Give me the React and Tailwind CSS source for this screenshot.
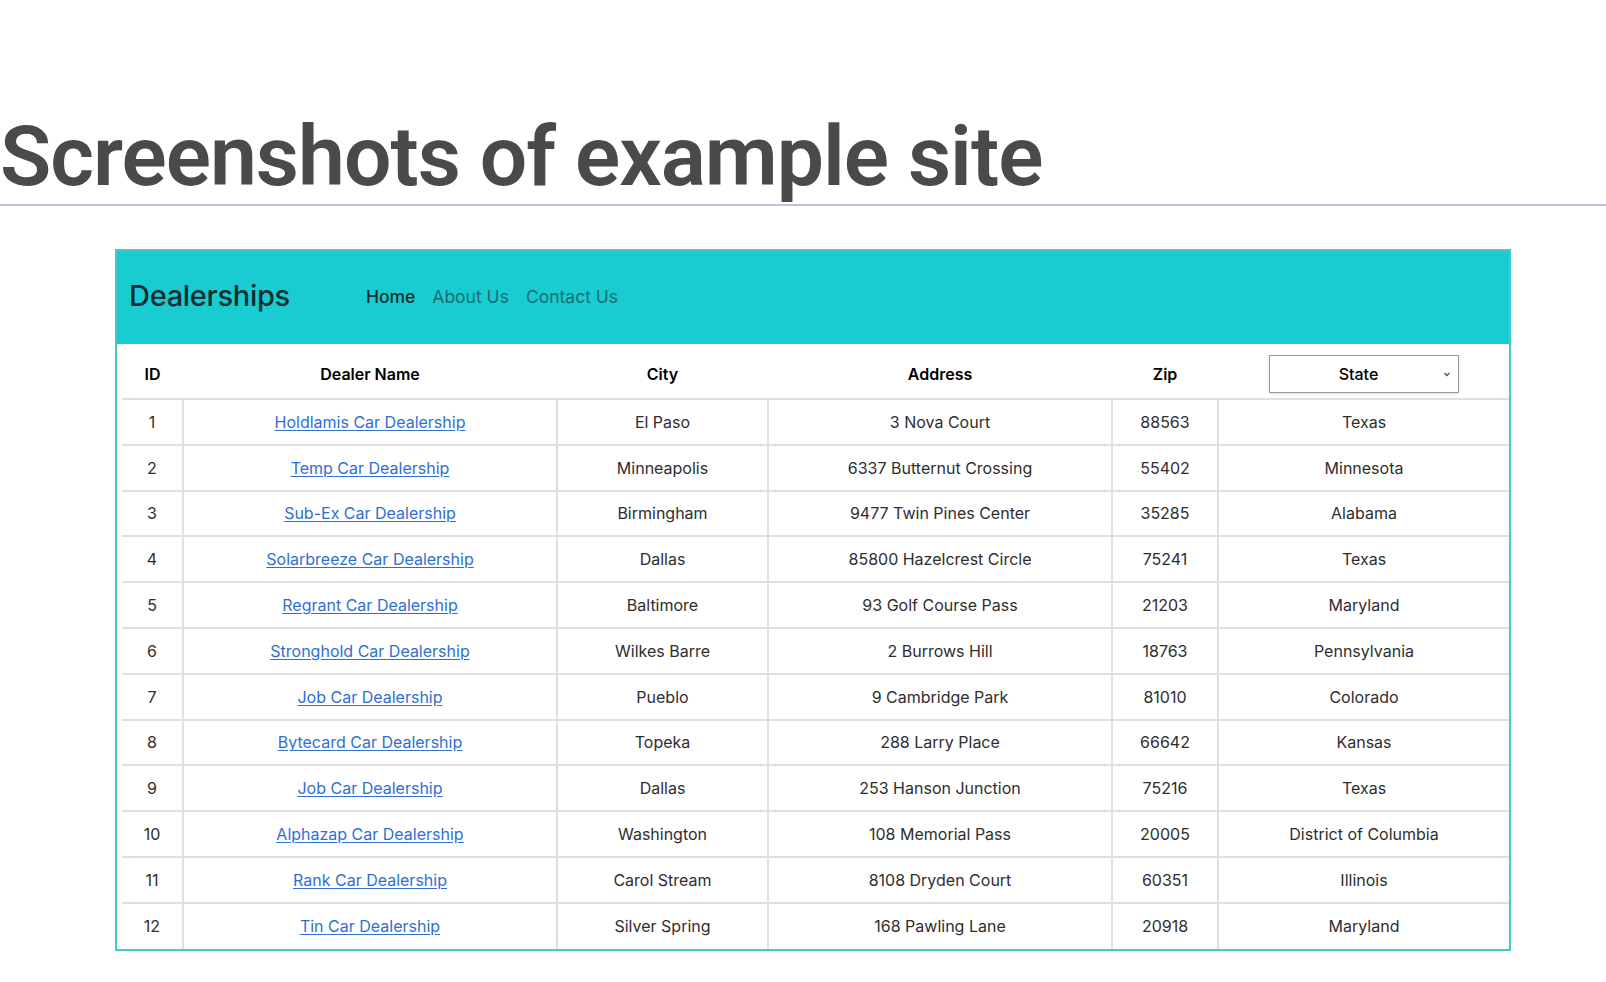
import React from 'react';

const dealers = [
  [1, 'Holdlamis Car Dealership', 'El Paso', '3 Nova Court', '88563', 'Texas'],
  [2, 'Temp Car Dealership', 'Minneapolis', '6337 Butternut Crossing', '55402', 'Minnesota'],
  [3, 'Sub-Ex Car Dealership', 'Birmingham', '9477 Twin Pines Center', '35285', 'Alabama'],
  [4, 'Solarbreeze Car Dealership', 'Dallas', '85800 Hazelcrest Circle', '75241', 'Texas'],
  [5, 'Regrant Car Dealership', 'Baltimore', '93 Golf Course Pass', '21203', 'Maryland'],
  [6, 'Stronghold Car Dealership', 'Wilkes Barre', '2 Burrows Hill', '18763', 'Pennsylvania'],
  [7, 'Job Car Dealership', 'Pueblo', '9 Cambridge Park', '81010', 'Colorado'],
  [8, 'Bytecard Car Dealership', 'Topeka', '288 Larry Place', '66642', 'Kansas'],
  [9, 'Job Car Dealership', 'Dallas', '253 Hanson Junction', '75216', 'Texas'],
  [10, 'Alphazap Car Dealership', 'Washington', '108 Memorial Pass', '20005', 'District of Columbia'],
  [11, 'Rank Car Dealership', 'Carol Stream', '8108 Dryden Court', '60351', 'Illinois'],
  [12, 'Tin Car Dealership', 'Silver Spring', '168 Pawling Lane', '20918', 'Maryland'],
];

const App = () => {
  return (
    <div className="w-[1606px] h-[982px] overflow-hidden bg-white font-['Inter',sans-serif]">
      {/* Slide title */}
      <h1 className="pt-[115px] text-[84px] leading-none font-semibold tracking-[-1px] text-[#4a4a4a] font-['Roboto',sans-serif]">
        Screenshots of example site
      </h1>
      <div className="mt-[5px] h-[2px] bg-[#c3bee2]" />

      {/* Screenshot card */}
      <div className="ml-[115px] mt-[43px] w-[1396px] border-2 border-[#45c9cb] bg-white">
        <nav className="flex items-center h-[93px] bg-[#18ccd1] pl-[12px]">
          <span className="-mt-[3px] text-[29px] font-medium text-[#0d2f31] tracking-[-0.3px]">Dealerships</span>
          <div className="flex items-center gap-[17px] ml-[76px] text-[17.5px]">
            <span className="font-medium text-[#0d2f31]">Home</span>
            <span className="text-[#1a6c70]">About Us</span>
            <span className="text-[#1a6c70]">Contact Us</span>
          </div>
        </nav>

        <div className="pl-[5px]">
          <table className="w-full table-fixed border-collapse text-[16px] text-[#2e2e2e]">
            <colgroup>
              <col className="w-[61px]" />
              <col className="w-[374px]" />
              <col className="w-[211px]" />
              <col className="w-[344px]" />
              <col className="w-[106px]" />
              <col />
            </colgroup>
            <thead>
              <tr className="h-[55px] border-b-2 border-[#e0e0e0]">
                <th className="pt-[6px] font-semibold text-black">ID</th>
                <th className="pt-[6px] font-semibold text-black">Dealer Name</th>
                <th className="pt-[6px] font-semibold text-black">City</th>
                <th className="pt-[6px] font-semibold text-black">Address</th>
                <th className="pt-[6px] font-semibold text-black">Zip</th>
                <th className="pt-[6px]">
                  <div className="mx-auto flex items-center w-[190px] h-[38px] border border-[#9a9a9a] bg-white shadow-sm">
                    <span className="flex-1 text-center font-medium text-black pl-[6px]">State</span>
                    <svg className="w-[10px] h-[10px] mr-[6px] text-[#555]" viewBox="0 0 10 10" fill="none" stroke="currentColor" strokeWidth="1.4">
                      <path d="M2.5 4l2.5 2.5L7.5 4" />
                    </svg>
                  </div>
                </th>
              </tr>
            </thead>
            <tbody>
              {dealers.map((d, i) => (
                <tr key={d[0]} className={`h-[45.8px] ${i < dealers.length - 1 ? 'border-b-2 border-[#e0e0e0]' : ''}`}>
                  <td className="text-center border-r-2 border-[#e0e0e0]">{d[0]}</td>
                  <td className="text-center border-r-2 border-[#e0e0e0]">
                    <a className="text-[#2f6fd2] underline underline-offset-2">{d[1]}</a>
                  </td>
                  <td className="text-center border-r-2 border-[#e0e0e0]">{d[2]}</td>
                  <td className="text-center border-r-2 border-[#e0e0e0]">{d[3]}</td>
                  <td className="text-center border-r-2 border-[#e0e0e0]">{d[4]}</td>
                  <td className="text-center">{d[5]}</td>
                </tr>
              ))}
            </tbody>
          </table>
        </div>
      </div>
    </div>
  );
};

export default App;
